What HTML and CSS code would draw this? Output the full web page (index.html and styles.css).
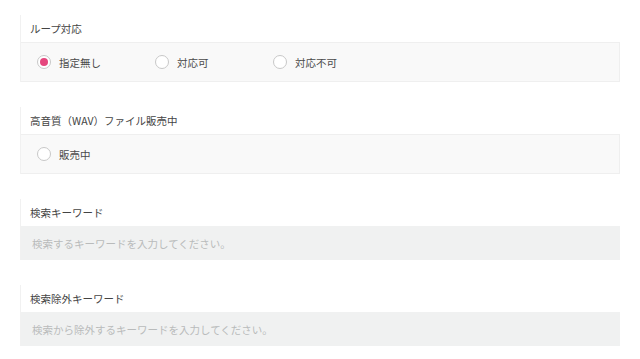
FILE: index.html
```html
<!DOCTYPE html>
<html lang="ja">
<head>
    <meta charset="UTF-8">
    <meta name="viewport" content="width=device-width, initial-scale=1.0">
    <title>検索条件</title>
    <link rel="stylesheet" href="styles.css">
</head>
<body>
    <div class="search-form">
        <div class="field">
            <div class="field-label">ループ対応</div>
            <div class="field-body">
                <label class="option"><span class="radio checked"></span>指定無し</label>
                <label class="option"><span class="radio"></span>対応可</label>
                <label class="option"><span class="radio"></span>対応不可</label>
            </div>
        </div>

        <div class="field">
            <div class="field-label">高音質（WAV）ファイル販売中</div>
            <div class="field-body">
                <label class="option"><span class="radio"></span>販売中</label>
            </div>
        </div>

        <div class="field">
            <div class="field-label">検索キーワード</div>
            <input class="text-input" type="text" placeholder="検索するキーワードを入力してください。">
        </div>

        <div class="field">
            <div class="field-label">検索除外キーワード</div>
            <input class="text-input" type="text" placeholder="検索から除外するキーワードを入力してください。">
        </div>
    </div>
</body>
</html>
```

FILE: styles.css
```css
* {
    margin: 0;
    padding: 0;
    box-sizing: border-box;
}

body {
    font-family: "Noto Sans CJK JP", "Noto Sans", sans-serif;
    background: #ffffff;
    color: #444444;
    padding: 15px 20px 0;
}

.field {
    border-left: 1px solid #f1f1f1;
    margin-bottom: 25px;
}

.field-label {
    height: 27px;
    display: flex;
    align-items: center;
    padding-left: 9px;
    font-size: 10.5px;
    color: #444444;
}

.field-body {
    height: 40px;
    display: flex;
    align-items: center;
    padding-left: 16px;
    background: #f9f9f9;
    border: 1px solid #efefef;
    border-left: none;
}

.option {
    width: 118px;
    display: flex;
    align-items: center;
    gap: 8px;
    font-size: 10.5px;
    color: #4a4a4a;
    cursor: pointer;
}

.radio {
    width: 14px;
    height: 14px;
    border-radius: 50%;
    border: 1.5px solid #c8c8c8;
    background: #ffffff;
    display: flex;
    align-items: center;
    justify-content: center;
}

.radio.checked::after {
    content: "";
    width: 8px;
    height: 8px;
    border-radius: 50%;
    background: #e5467d;
}

.text-input {
    display: block;
    width: 100%;
    height: 34px;
    border: none;
    outline: none;
    background: #f0f1f1;
    padding-left: 11px;
    font-family: inherit;
    font-size: 10.5px;
    color: #333333;
}

.text-input::placeholder {
    color: #b9bbbb;
}
```
